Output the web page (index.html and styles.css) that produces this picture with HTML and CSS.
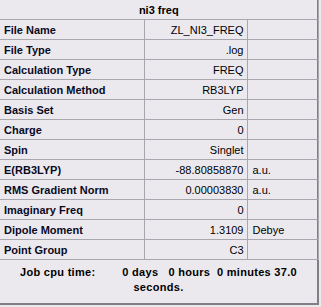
FILE: index.html
```html
<!DOCTYPE html>
<html lang="en">
<head>
    <meta charset="UTF-8">
    <title>ni3 freq</title>
    <link rel="stylesheet" href="styles.css">
</head>
<body>
    <div class="panel">
        <table class="summary">
            <colgroup>
                <col class="col-label">
                <col class="col-value">
                <col class="col-unit">
            </colgroup>
            <tr><th colspan="3" class="title">ni3 freq</th></tr>
            <tr><td class="label">File Name</td><td class="value">ZL_NI3_FREQ</td><td class="unit"></td></tr>
            <tr><td class="label">File Type</td><td class="value">.log</td><td class="unit"></td></tr>
            <tr><td class="label">Calculation Type</td><td class="value">FREQ</td><td class="unit"></td></tr>
            <tr><td class="label">Calculation Method</td><td class="value">RB3LYP</td><td class="unit"></td></tr>
            <tr><td class="label">Basis Set</td><td class="value">Gen</td><td class="unit"></td></tr>
            <tr><td class="label">Charge</td><td class="value">0</td><td class="unit"></td></tr>
            <tr><td class="label">Spin</td><td class="value">Singlet</td><td class="unit"></td></tr>
            <tr><td class="label">E(RB3LYP)</td><td class="value">-88.80858870</td><td class="unit">a.u.</td></tr>
            <tr><td class="label">RMS Gradient Norm</td><td class="value">0.00003830</td><td class="unit">a.u.</td></tr>
            <tr><td class="label">Imaginary Freq</td><td class="value">0</td><td class="unit"></td></tr>
            <tr><td class="label">Dipole Moment</td><td class="value">1.3109</td><td class="unit">Debye</td></tr>
            <tr><td class="label">Point Group</td><td class="value">C3</td><td class="unit"></td></tr>
        </table>
        <div class="cpu-time">
            <div class="cpu-line">Job cpu time:        0 days   0 hours  0 minutes 37.0</div>
            <div class="cpu-line">seconds.</div>
        </div>
    </div>
</body>
</html>
```

FILE: styles.css
```css
html, body {
    margin: 0;
    padding: 0;
    background-color: #ebe9ee;
}

body {
    font-family: "Liberation Sans", Arial, sans-serif;
    font-size: 11px;
    color: #000;
}

.panel {
    width: 317px;
    height: 303px;
    border-right: 2px solid #7f7f86;
    border-bottom: 2px solid #7f7f86;
    background-color: #ebe9ee;
}

.summary {
    border-collapse: collapse;
    width: 318px;
    table-layout: fixed;
}

.col-label { width: 144px; }
.col-value { width: 103px; }
.col-unit { width: 71px; }

.summary th,
.summary td {
    border: 1px solid #a9a7ae;
    height: 19px;
    padding: 0;
    white-space: nowrap;
    overflow: hidden;
}

.summary tr:first-child th {
    border-top: none;
}

.summary td:first-child,
.summary th {
    border-left: none;
}

.title {
    font-weight: bold;
    text-align: center;
}

.label {
    font-weight: bold;
    padding-left: 4px !important;
    color: #0a0a1e;
}

.value {
    text-align: right;
    padding-right: 3px !important;
}

.unit {
    padding-left: 5px !important;
}

.cpu-time {
    font-weight: bold;
    text-align: center;
    padding-top: 5px;
    line-height: 15px;
    letter-spacing: 0.3px;
}

.cpu-line {
    white-space: pre;
}
```
